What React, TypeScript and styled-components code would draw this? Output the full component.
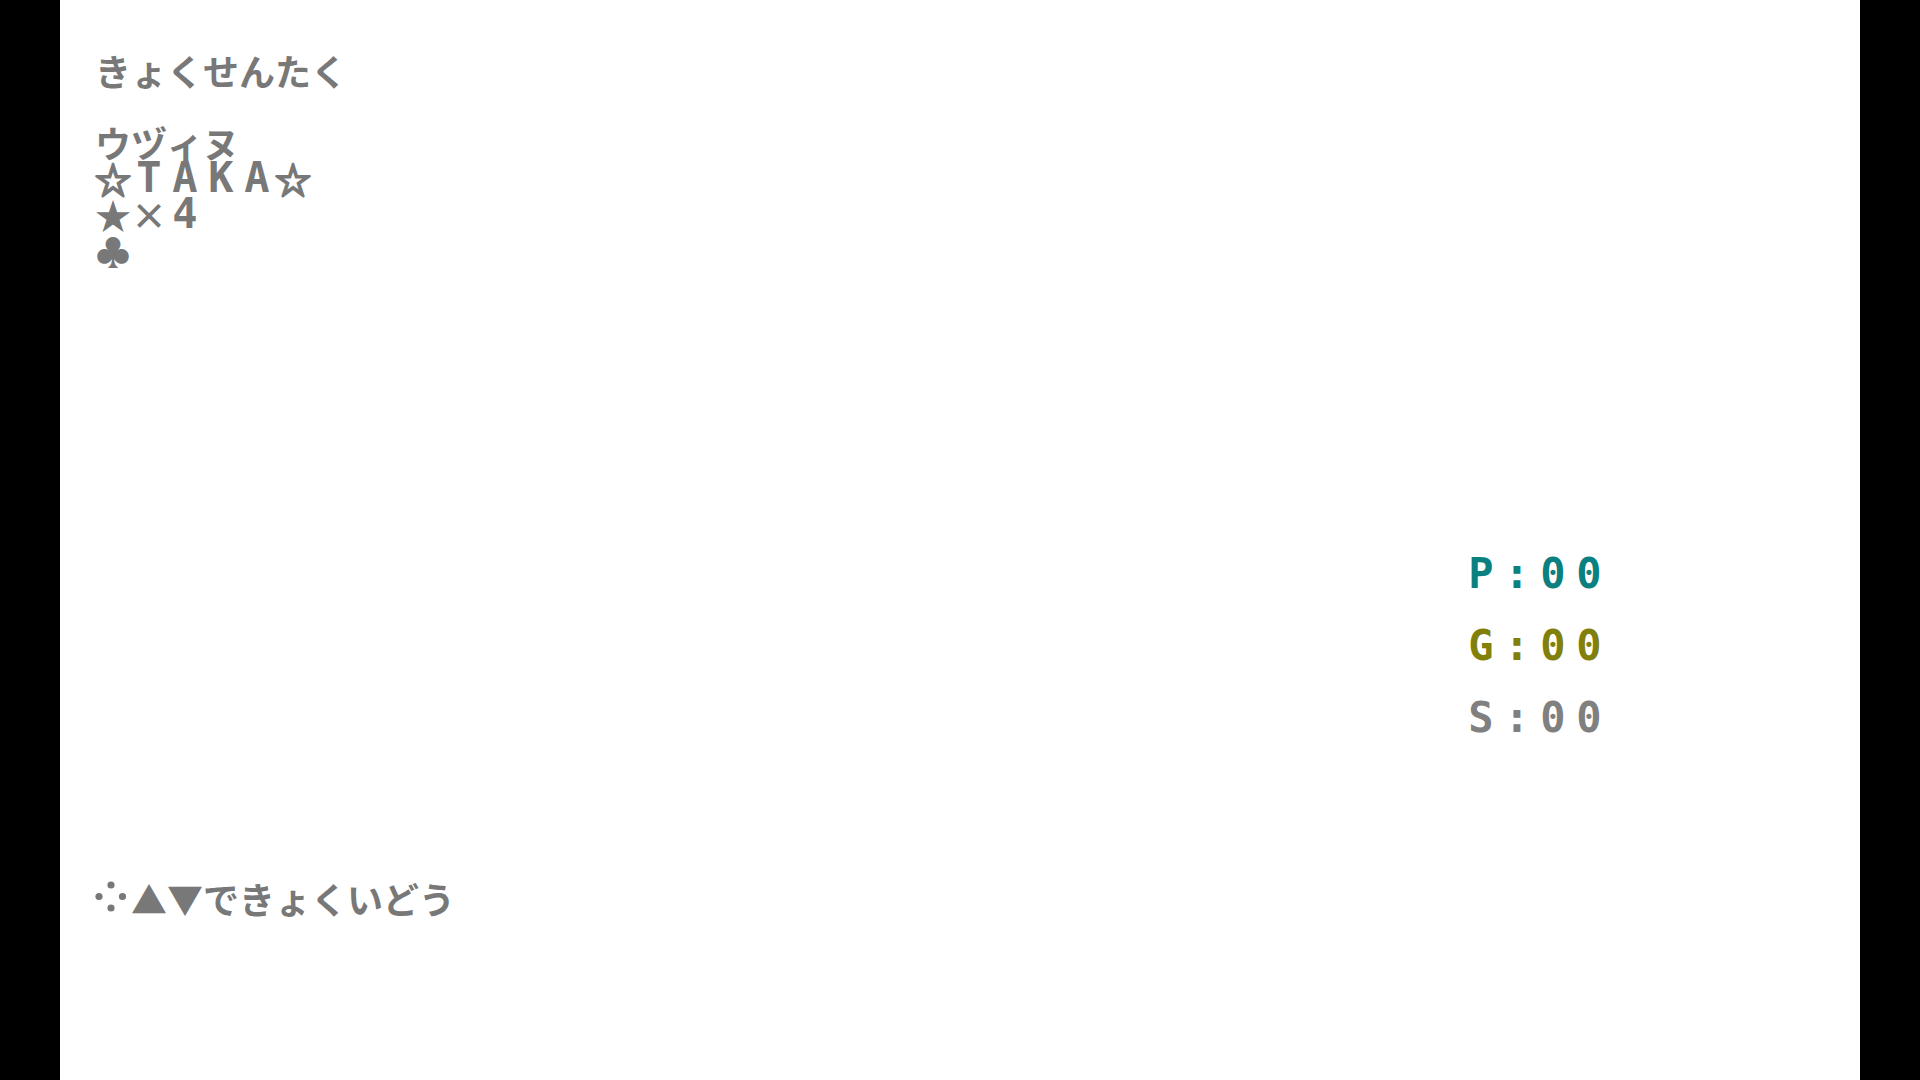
import React from "react";
import styled, { createGlobalStyle } from "styled-components";

const GlobalStyle = createGlobalStyle`
  html, body {
    margin: 0;
    padding: 0;
    background: #000;
  }
`;

const CELL = 36;

const Screen = styled.div`
  width: 1800px;
  height: 1080px;
  margin: 0 auto;
  background: #fff;
  box-sizing: border-box;
  padding: 52px 0 0 35px;
  display: grid;
  grid-template-columns: repeat(48, ${CELL}px);
  grid-auto-rows: ${CELL}px;
`;

const Line = styled.div<{ $row: number; $col?: number; $color?: string }>`
  grid-row: ${(p) => p.$row};
  grid-column: ${(p) => p.$col ?? 1} / span 30;
  display: flex;
  height: ${CELL}px;
  color: ${(p) => p.$color ?? "#787878"};
  white-space: nowrap;
`;

const Cell = styled.span<{ $latin?: boolean; $outline?: boolean }>`
  display: inline-block;
  width: ${CELL}px;
  height: ${CELL}px;
  text-align: center;
  line-height: ${CELL}px;
  font-family: ${(p) =>
    p.$latin
      ? `"DejaVu Sans Mono", "Liberation Mono", monospace`
      : `"Noto Sans CJK JP", "Noto Sans", sans-serif`};
  font-size: ${(p) => (p.$latin ? 42 : 36)}px;
  font-weight: 700;
  -webkit-text-stroke: ${(p) => (p.$outline ? "2px currentColor" : "0")};
  overflow: visible;
`;

const PadIcon = styled.svg`
  display: block;
  width: ${CELL}px;
  height: ${CELL}px;
`;

// split into fixed-width cells so every glyph sits on the character grid
const Chars = ({ text }: { text: string }) => (
  <>
    {Array.from(text).map((ch, i) => (
      <Cell key={i} $latin={/[A-Za-z0-9:]/.test(ch)} $outline={ch === "☆"}>
        {ch}
      </Cell>
    ))}
  </>
);

const DPad = () => (
  <PadIcon viewBox="0 0 36 36">
    <g fill="currentColor">
      <circle cx="16" cy="5" r="3.6" />
      <circle cx="4" cy="16.5" r="3.6" />
      <circle cx="27.5" cy="16.5" r="3.6" />
      <circle cx="16" cy="28" r="3.6" />
    </g>
  </PadIcon>
);

const songs = ["ウヅィヌ", "☆TAKA☆", "★×4", "♣"];

const scores = [
  { label: "P", value: "00", color: "#0a8080" },
  { label: "G", value: "00", color: "#80800a" },
  { label: "S", value: "00", color: "#808080" },
];

export default function App() {
  return (
    <>
      <GlobalStyle />
      <Screen>
        <Line $row={1}>
          <Chars text="きょくせんたく" />
        </Line>
        {songs.map((s, i) => (
          <Line key={s} $row={3 + i}>
            <Chars text={s} />
          </Line>
        ))}
        {scores.map((s, i) => (
          <Line key={s.label} $row={15 + i * 2} $col={39} $color={s.color}>
            <Chars text={`${s.label}:${s.value}`} />
          </Line>
        ))}
        <Line $row={24}>
          <DPad />
          <Chars text="▲▼できょくいどう" />
        </Line>
      </Screen>
    </>
  );
}
